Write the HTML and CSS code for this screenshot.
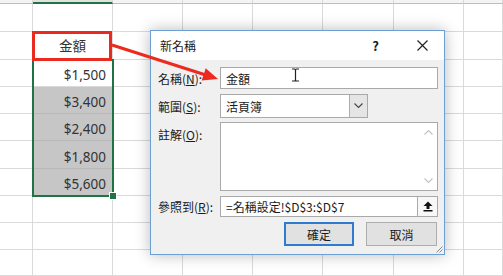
FILE: index.html
```html
<!DOCTYPE html>
<html lang="zh-Hant">
<head>
  <meta charset="UTF-8">
  <title>新名稱</title>
  <link rel="stylesheet" href="styles.css">
</head>
<body>
  <div class="sheet">
    <div class="hd"></div><div class="hd sel"></div><div class="hd"></div><div class="hd"></div><div class="hd"></div><div class="hd"></div><div class="hd"></div><div class="hd"></div>
    <div class="c"></div><div class="c"></div><div class="c"></div><div class="c"></div><div class="c"></div><div class="c"></div><div class="c"></div><div class="c"></div>
    <div class="c"></div><div class="c title">金額</div><div class="c"></div><div class="c"></div><div class="c"></div><div class="c"></div><div class="c"></div><div class="c"></div>
    <div class="c"></div><div class="c num">$1,500</div><div class="c"></div><div class="c"></div><div class="c"></div><div class="c"></div><div class="c"></div><div class="c"></div>
    <div class="c"></div><div class="c num grey">$3,400</div><div class="c"></div><div class="c"></div><div class="c"></div><div class="c"></div><div class="c"></div><div class="c"></div>
    <div class="c"></div><div class="c num grey">$2,400</div><div class="c"></div><div class="c"></div><div class="c"></div><div class="c"></div><div class="c"></div><div class="c"></div>
    <div class="c"></div><div class="c num grey">$1,800</div><div class="c"></div><div class="c"></div><div class="c"></div><div class="c"></div><div class="c"></div><div class="c"></div>
    <div class="c"></div><div class="c num grey">$5,600</div><div class="c"></div><div class="c"></div><div class="c"></div><div class="c"></div><div class="c"></div><div class="c"></div>
    <div class="c"></div><div class="c"></div><div class="c"></div><div class="c"></div><div class="c"></div><div class="c"></div><div class="c"></div><div class="c"></div>
    <div class="c"></div><div class="c"></div><div class="c"></div><div class="c"></div><div class="c"></div><div class="c"></div><div class="c"></div><div class="c"></div>
    <div class="c"></div><div class="c"></div><div class="c"></div><div class="c"></div><div class="c"></div><div class="c"></div><div class="c"></div><div class="c"></div>
  </div>

  <div class="selection"><span class="handle"></span></div>
  <div class="callout"></div>

  <div class="dialog">
    <div class="titlebar">
      <span class="caption">新名稱</span>
      <span class="help">?</span>
      <svg class="close" width="11" height="11" viewBox="0 0 11 11"><path d="M0.5 0.5 L10.5 10.5 M10.5 0.5 L0.5 10.5" stroke="#222" stroke-width="1.2"/></svg>
    </div>
    <div class="body">
      <div class="row r-name">
        <label>名稱(<u>N</u>):</label>
        <div class="field">金額</div>
        <svg class="ibeam" width="9" height="14" viewBox="0 0 9 14"><path d="M1 1 H3.5 Q4.5 1 4.5 2 V12 Q4.5 13 3.5 13 H1 M8 1 H5.5 Q4.5 1 4.5 2 M8 13 H5.5 Q4.5 13 4.5 12" fill="none" stroke="#222" stroke-width="1.2"/></svg>
      </div>
      <div class="row r-scope">
        <label>範圍(<u>S</u>):</label>
        <div class="combo">
          <span class="value">活頁簿</span>
          <span class="drop"><svg width="9" height="6" viewBox="0 0 9 6"><path d="M0.5 0.5 L4.5 4.5 L8.5 0.5" fill="none" stroke="#444" stroke-width="1.1"/></svg></span>
        </div>
      </div>
      <div class="row r-note">
        <label>註解(<u>O</u>):</label>
        <div class="memo">
          <span class="bar">
            <svg width="9" height="6" viewBox="0 0 9 6"><path d="M0.5 5.5 L4.5 1.5 L8.5 5.5" fill="none" stroke="#c2c2c2" stroke-width="1.1"/></svg>
            <svg width="9" height="6" viewBox="0 0 9 6"><path d="M0.5 0.5 L4.5 4.5 L8.5 0.5" fill="none" stroke="#c2c2c2" stroke-width="1.1"/></svg>
          </span>
        </div>
      </div>
      <div class="row r-ref">
        <label>參照到(<u>R</u>):</label>
        <div class="field ref">=名稱設定!$D$3:$D$7</div>
        <span class="pick"><svg width="10" height="11" viewBox="0 0 10 11"><path d="M5 0.5 L9.5 5 H6.5 V8 H3.5 V5 H0.5 Z" fill="#111"/><rect x="0.5" y="9" width="9" height="1.5" fill="#111"/></svg></span>
      </div>
      <div class="row r-btns">
        <button class="btn ok">確定</button>
        <button class="btn">取消</button>
      </div>
      <svg class="grip" width="8" height="8" viewBox="0 0 8 8"><path d="M7.5 1.5 L1.5 7.5 M7.5 4.5 L4.5 7.5" stroke="#8a8a8a" stroke-width="1"/></svg>
    </div>
  </div>

  <!-- annotation drawn over the dialog -->
  <svg class="arrow" width="503" height="276" viewBox="0 0 503 276">
    <line x1="112" y1="45" x2="205" y2="74.8" stroke="#ec2a1e" stroke-width="3"/>
    <polygon points="218,79 201.7,80.6 205.7,68.2" fill="#ec2a1e"/>
  </svg>
</body>
</html>
```

FILE: styles.css
```css
body { margin: 0; width: 503px; height: 276px; overflow: hidden; position: relative; background: #fff; font-family: "Noto Sans", "Noto Sans CJK TC", sans-serif; }

/* worksheet */
.sheet { display: grid; grid-template-columns: 33px 80px 70px 70px 70px 71px 70px 39px; grid-template-rows: 4px 28px 28px 27px 27px 27px 28px 27px 27px 27px 26px; width: 503px; }
.hd { background: #f4f4f4; border-right: 1px solid #d8d8d8; border-bottom: 1px solid #bdbdbd; box-sizing: border-box; }
.hd.sel { background: #e1e1e1; border-bottom: 2px solid #217346; }
.c { border-right: 1px solid #dadada; border-bottom: 1px solid #dadada; box-sizing: border-box; display: flex; align-items: flex-end; padding: 0 6px 3px; font-size: 13.5px; color: #333; line-height: 16px; }
.c.title { justify-content: center; padding-bottom: 5px; }
.c.num { justify-content: flex-end; }
.c.grey { background: #c6c6c6; border-bottom-color: #b8b8b8; }

.selection { position: absolute; left: 32px; top: 59px; width: 82px; height: 138px; box-sizing: border-box; border: 2px solid #217346; }
.handle { position: absolute; right: -5px; bottom: -5px; width: 6px; height: 6px; background: #217346; border: 1px solid #fff; }
.callout { position: absolute; left: 32px; top: 31px; width: 80px; height: 30px; box-sizing: border-box; border: 3px solid #ea2a1f; }
.arrow { position: absolute; left: 0; top: 0; pointer-events: none; }

/* dialog */
.dialog { position: absolute; left: 150px; top: 30px; width: 295px; height: 225px; box-sizing: border-box; border: 1px solid #6c9fd3; background: #f0f0f0; box-shadow: 0 0 14px rgba(0,0,0,0.28); font-family: "Noto Sans CJK TC", sans-serif; font-size: 12px; color: #1a1a1a; display: flex; flex-direction: column; }
.titlebar { height: 29px; background: #fff; display: flex; align-items: center; padding-left: 9px; }
.caption { flex: 1; }
.help { font-weight: bold; font-size: 13px; margin-right: 38px; }
.close { margin-right: 16px; }
.body { flex: 1; position: relative; padding: 7px 6px 0 7px; }
.row { display: flex; align-items: center; position: relative; }
.row label { width: 62px; flex: none; white-space: nowrap; }
.r-name { height: 22px; }
.r-scope { height: 24px; margin-top: 5px; }
.r-note { height: 69px; margin-top: 4px; align-items: flex-start; }
.r-note label { margin-top: 4px; }
.r-ref { height: 21px; margin-top: 5px; }
.r-btns { height: 24px; margin-top: 5px; justify-content: flex-end; gap: 12px; padding-right: 1px; }

.field { flex: 1; height: 100%; box-sizing: border-box; background: #fff; border: 1px solid #a9a9a9; display: flex; align-items: center; padding-left: 5px; }
.ibeam { position: absolute; left: 133px; top: 1px; }
.combo { width: 148px; height: 100%; box-sizing: border-box; background: #fff; border: 1px solid #a9a9a9; display: flex; }
.combo .value { flex: 1; display: flex; align-items: center; padding-left: 5px; }
.combo .drop { width: 17px; background: #e5e5e5; border-left: 1px solid #adadad; display: flex; align-items: center; justify-content: center; }
.memo { flex: 1; height: 100%; box-sizing: border-box; background: #fff; border: 1px solid #a9a9a9; display: flex; justify-content: flex-end; }
.memo .bar { width: 17px; display: flex; flex-direction: column; justify-content: space-between; align-items: center; padding: 6px 0; }
.pick { width: 20px; height: 100%; box-sizing: border-box; background: #f7f7f7; border: 1px solid #a9a9a9; border-left: none; display: flex; align-items: center; justify-content: center; }
.btn { font: inherit; color: #1a1a1a; height: 24px; background: #e1e1e1; border: 1px solid #adadad; padding: 0; width: 71px; }
.btn.ok { width: 70px; border: 2px solid #2f7bd0; }
.grip { position: absolute; right: 1px; bottom: 1px; }
```
